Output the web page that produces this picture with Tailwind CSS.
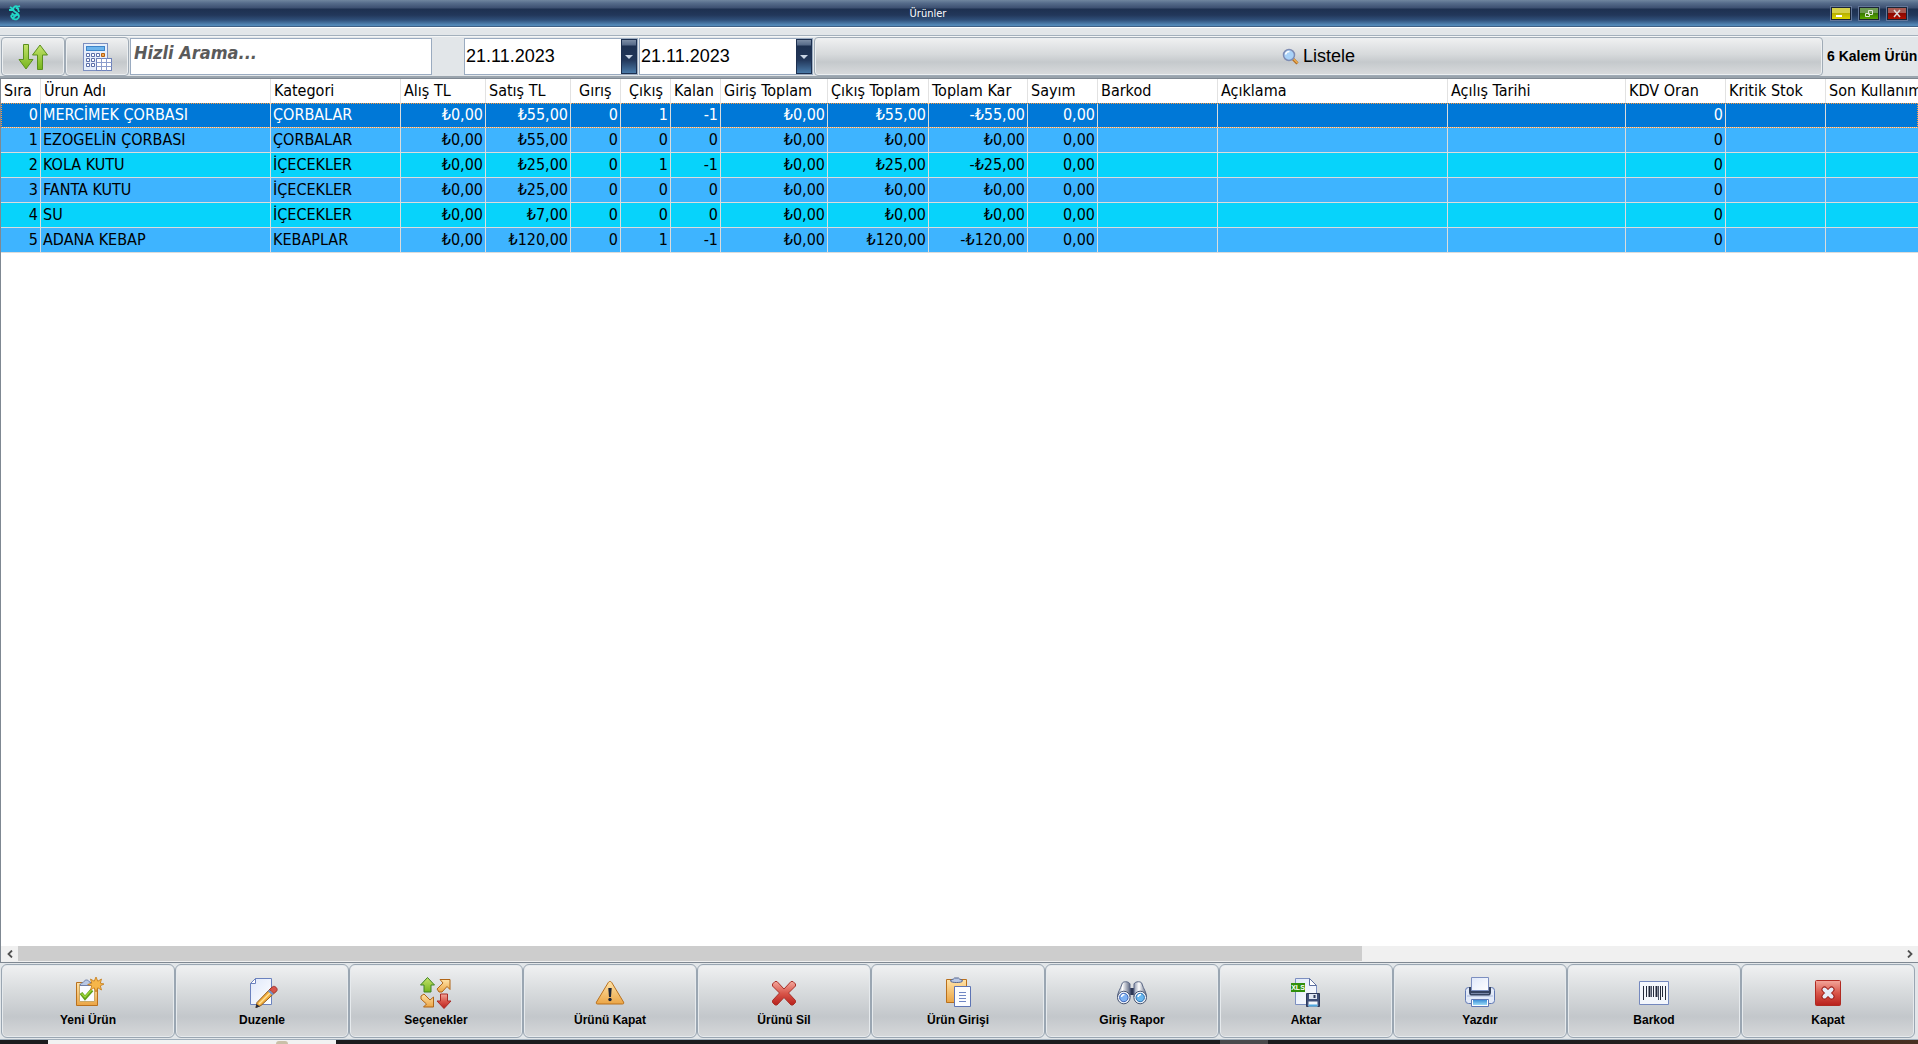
<!DOCTYPE html>
<html lang="tr">
<head>
<meta charset="utf-8">
<title>Ürünler</title>
<script src="https://cdn.jsdelivr.net/npm/@tailwindcss/browser@4"></script>
</head>
<body class="bg-[#e2e6e9] text-black font-['Liberation_Sans',sans-serif]">
<svg width="0" height="0" class="absolute" aria-hidden="true">
  <defs>
    <linearGradient id="gOrange" x1="0" y1="0" x2="0" y2="1"><stop offset="0" stop-color="#ffe3a8"/><stop offset="1" stop-color="#eba545"/></linearGradient>
    <linearGradient id="gGreen" x1="0" y1="0" x2="0" y2="1"><stop offset="0" stop-color="#c4e36c"/><stop offset="1" stop-color="#76b51c"/></linearGradient>
    <linearGradient id="gRed" x1="0" y1="0" x2="0" y2="1"><stop offset="0" stop-color="#f3a79c"/><stop offset=".5" stop-color="#d9564a"/><stop offset="1" stop-color="#b8201c"/></linearGradient>
    <linearGradient id="gPaper" x1="0" y1="0" x2="1" y2="1"><stop offset="0" stop-color="#dfe8fa"/><stop offset="1" stop-color="#ffffff"/></linearGradient>
    <linearGradient id="gSteel" x1="0" y1="0" x2="1" y2="0"><stop offset="0" stop-color="#8d97ad"/><stop offset=".4" stop-color="#ffffff"/><stop offset="1" stop-color="#5d6781"/></linearGradient>
    <linearGradient id="gBlue" x1="0" y1="0" x2="0" y2="1"><stop offset="0" stop-color="#3d8fd6"/><stop offset="1" stop-color="#9bdcf8"/></linearGradient>
  </defs>
</svg>
<div class="flex flex-col h-screen overflow-hidden">

  <header class="h-[27px] shrink-0 flex items-center border-b border-[#3f6187] bg-[linear-gradient(to_bottom,#70869f_0px,#566c8b_3px,#3c4f70_8px,#1d3050_9px,#22375a_15px,#30507a_20px,#5489b8_25px)]">
    <svg class="ml-[9px] w-3 h-4" viewBox="0 0 12 16" fill="none" stroke="#22d8c8" stroke-width="1.8"><path d="M1 2l3 2M0 5h4M9 2c-3-2-6 1-4 4 2 2 5 2 5 5s-3 4-5 3-4-3-2-4 5 2 6-1M8 2l3-1M9 4l1 3M3 8l3 4M7 3l3 1M3 14l6-6"/></svg>
    <h1 class="flex-1 text-center text-[11px] text-white pl-1 pt-0.5 font-['DejaVu_Sans_Condensed','DejaVu_Sans',sans-serif]">Ürünler</h1>
    <div class="flex gap-2 mr-[11px]">
      <button aria-label="Küçült" class="w-5 h-[13px] border border-[#1a2435] outline outline-[#64779a] bg-[linear-gradient(#d5d04a_45%,#b8b000_50%,#dcd600)] flex"><svg class="w-[18px] h-[11px]" viewBox="0 0 18 11"><path d="M4 8h6" stroke="#fff" stroke-width="2"/></svg></button>
      <button aria-label="Geri yükle" class="w-5 h-[13px] border border-[#1a2435] outline outline-[#64779a] bg-[linear-gradient(#6e9a52_45%,#387a00_50%,#5aa800)] flex"><svg class="w-[18px] h-[11px]" viewBox="0 0 18 11" fill="none" stroke="#e0e8d8"><path d="M8.500 2.500h4v4h-4zM5.500 5.500h4v3h-4z"/></svg></button>
      <button aria-label="Pencereyi kapat" class="w-5 h-[13px] border border-[#1a2435] outline outline-[#64779a] bg-[linear-gradient(#a85850_45%,#8c0800_50%,#b01000)] flex"><svg class="w-[18px] h-[11px]" viewBox="0 0 18 11"><path d="M6 2l6 7M12 2l-6 7" stroke="#ddd" stroke-width="1.500"/></svg></button>
    </div>
  </header>

  <div class="h-[9px] shrink-0 border-t border-b border-t-white border-b-[#a3b0bc]"></div>

  <div class="h-[42px] shrink-0 flex items-center pl-px border-t border-t-[#f4f6f7] border-b-2 border-b-[#9aa4ad] overflow-hidden">
    <button aria-label="Sırala" class="w-16 h-[39px] shrink-0 flex items-center justify-center rounded border border-[#a0abb6] shadow-[inset_0_0_0_1px_#eceff1] bg-[linear-gradient(#f0f1f2,#d6d9db_45%,#c5c9cc_65%,#d9dbdd)]">
      <svg class="w-8 h-8" viewBox="0 0 32 32" fill="url(#gGreen)" stroke="#5b8f1e" stroke-width="1"><path d="M6.500 3.500h5v15h4.500l-7 9.500-7-9.500h4.500z"/><path d="M20.500 28.500h5v-14.500h5l-7.500-10-7.500 10h5z"/></svg>
    </button>
    <button aria-label="Hesapla" class="w-16 h-[39px] shrink-0 flex items-center justify-center rounded border border-[#a0abb6] shadow-[inset_0_0_0_1px_#eceff1] bg-[linear-gradient(#f0f1f2,#d6d9db_45%,#c5c9cc_65%,#d9dbdd)]">
      <svg class="w-8 h-8" viewBox="0 0 32 32"><rect x="2.500" y="2.500" width="24" height="27" fill="#e6eefb" stroke="#7c8fc0"/><rect x="5.500" y="5.500" width="18" height="4" fill="#6db4ec" stroke="#3d84c8"/><g fill="#fff" stroke="#5c6fa8"><path d="M5.500 12.500h3v3h-3zM10.500 12.500h3v3h-3zM15.500 12.500h3v3h-3zM5.500 17.500h3v3h-3zM10.500 17.500h3v3h-3zM5.500 22.500h3v3h-3zM10.500 22.500h3v3h-3z"/></g><path d="M20.500 12.500h3v3h-3z" fill="#f0a850" stroke="#b86010"/><rect x="15.500" y="17.500" width="15" height="12" fill="#fff" stroke="#6e82ba"/><path d="M15.500 21.500h15M15.500 25.500h15M20.500 17.500v12M25.500 17.500v12" stroke="#8c9dcc"/></svg>
    </button>
    <input type="text" aria-label="Hızlı arama" placeholder="Hizli Arama..." class="ml-px w-[302px] h-[37px] shrink-0 border border-[#9aabc0] bg-white pl-[3px] pb-2 text-[18px] font-bold italic placeholder:text-[#5a5a5a] font-['DejaVu_Sans_Condensed','DejaVu_Sans',sans-serif]">
    <div class="ml-8 w-[174px] h-[37px] shrink-0 flex border border-[#9aabc0] bg-white">
      <input type="text" aria-label="Başlangıç tarihi" value="21.11.2023" class="min-w-0 flex-1 pl-px text-[18px]">
      <button aria-label="Başlangıç tarihini seç" class="w-4 flex items-center justify-center border border-[#1d3050] bg-[linear-gradient(#7d8ea6_0px,#566a88_5px,#1d3050_6px,#22375a_20px,#4a7aa8)]"><svg class="w-2 h-1" viewBox="0 0 8 4"><path d="M0 0h8L4 4z" fill="#c8d4e4"/></svg></button>
    </div>
    <div class="ml-px w-[174px] h-[37px] shrink-0 flex border border-[#9aabc0] bg-white">
      <input type="text" aria-label="Bitiş tarihi" value="21.11.2023" class="min-w-0 flex-1 pl-px text-[18px]">
      <button aria-label="Bitiş tarihini seç" class="w-4 flex items-center justify-center border border-[#1d3050] bg-[linear-gradient(#7d8ea6_0px,#566a88_5px,#1d3050_6px,#22375a_20px,#4a7aa8)]"><svg class="w-2 h-1" viewBox="0 0 8 4"><path d="M0 0h8L4 4z" fill="#c8d4e4"/></svg></button>
    </div>
    <button class="ml-px flex-1 h-[39px] flex items-center justify-center gap-1 text-[18px] rounded border border-[#a0abb6] shadow-[inset_0_0_0_1px_#eceff1] bg-[linear-gradient(#f0f1f2,#d6d9db_45%,#c5c9cc_65%,#d9dbdd)]">
      <svg class="w-[17px] h-[17px]" viewBox="0 0 17 17"><path d="M11 11l4.500 4.500" stroke="#b06a20" stroke-width="3"/><path d="M11.500 11l4 4" stroke="#f0b050" stroke-width="1.500"/><circle cx="7" cy="7" r="5.500" fill="#a9d2f8" stroke="#7d8cb4" stroke-width="1.500"/><path d="M3.500 6.500a4 4 0 0 1 4-3" stroke="#fff" stroke-width="1.500" fill="none"/></svg>
      Listele
    </button>
    <p class="w-[95px] shrink-0 pl-1 text-[14px] font-bold whitespace-nowrap">6 Kalem Ürün</p>
  </div>

  <main class="flex-1 min-h-0 flex flex-col bg-white border-l border-b border-t border-[#7f8892] font-['DejaVu_Sans_Condensed','DejaVu_Sans',sans-serif] text-base">
    <div class="flex-1 overflow-hidden">
      <table class="w-full table-fixed border-separate border-spacing-0 whitespace-nowrap leading-6">
        <colgroup>
          <col class="w-[40px]"><col class="w-[230px]"><col class="w-[130px]"><col class="w-[85px]"><col class="w-[85px]"><col class="w-[50px]"><col class="w-[50px]"><col class="w-[50px]"><col class="w-[107px]"><col class="w-[101px]"><col class="w-[99px]"><col class="w-[70px]"><col class="w-[120px]"><col class="w-[230px]"><col class="w-[178px]"><col class="w-[100px]"><col class="w-[100px]"><col>
        </colgroup>
        <thead><tr id="head"></tr></thead>
        <tbody id="rows"></tbody>
      </table>
    </div>
    <div class="h-4 shrink-0 flex items-center bg-[#f0f0f0]" role="scrollbar" aria-controls="rows" aria-orientation="horizontal" aria-valuenow="0">
      <button aria-label="Sola kaydır" class="w-[17px] h-4 flex items-center justify-center"><svg class="w-2 h-2" viewBox="0 0 8 8"><path d="M6 0.500L2.500 4L6 7.500" fill="none" stroke="#505050" stroke-width="1.800"/></svg></button>
      <div class="flex-1 h-[15px] self-start"><div class="h-full w-[71.4%] bg-[#cdcdcd]"></div></div>
      <button aria-label="Sağa kaydır" class="w-[17px] h-4 flex items-center justify-center"><svg class="w-2 h-2" viewBox="0 0 8 8"><path d="M2 0.500L5.500 4L2 7.500" fill="none" stroke="#505050" stroke-width="1.800"/></svg></button>
    </div>
  </main>

  <nav class="h-[77px] shrink-0 flex pt-px pb-px pl-px pr-[3px] border-b border-[#a0aebb]" id="actions"></nav>

  <div class="h-1 shrink-0 flex bg-[linear-gradient(to_right,#1c1c1e_80%,#2a211d_90%,#4a3022)]">
    <div class="ml-12 w-72 bg-[#f2f2f2] flex"><div class="ml-[228px] mt-px w-3 h-[3px] rounded-t-full bg-[#c9c0a8]"></div></div>
    <div class="ml-[884px] w-12 bg-[#4a4a4c]"></div>
  </div>
</div>

<script>
const heads = ['Sıra','Ürun Adı','Kategori','Alış TL','Satış TL','Gırış','Çıkış','Kalan','Giriş Toplam','Çıkış Toplam','Toplam Kar','Sayım','Barkod','Açıklama','Açılış Tarihi','KDV Oran','Kritik Stok','Son Kullanım'];
const pad = {5:'pl-2', 6:'pl-2'};
document.getElementById('head').innerHTML = heads.map((h,i) =>
  `<th scope="col" class="h-6 p-0 ${pad[i]||'pl-[3px]'} text-left font-normal border-r border-[#e2e2e2] last:border-r-0">${h}</th>`).join('');

const data = [
  ['0','MERCİMEK ÇORBASI','ÇORBALAR','₺0,00','₺55,00','0','1','-1','₺0,00','₺55,00','-₺55,00','0,00','','','','0','',''],
  ['1','EZOGELİN ÇORBASI','ÇORBALAR','₺0,00','₺55,00','0','0','0','₺0,00','₺0,00','₺0,00','0,00','','','','0','',''],
  ['2','KOLA KUTU','İÇECEKLER','₺0,00','₺25,00','0','1','-1','₺0,00','₺25,00','-₺25,00','0,00','','','','0','',''],
  ['3','FANTA KUTU','İÇECEKLER','₺0,00','₺25,00','0','0','0','₺0,00','₺0,00','₺0,00','0,00','','','','0','',''],
  ['4','SU','İÇECEKLER','₺0,00','₺7,00','0','0','0','₺0,00','₺0,00','₺0,00','0,00','','','','0','',''],
  ['5','ADANA KEBAP','KEBAPLAR','₺0,00','₺120,00','0','1','-1','₺0,00','₺120,00','-₺120,00','0,00','','','','0','',''],
];
document.getElementById('rows').innerHTML = data.map((r,n) => {
  const tone = n === 0 ? 'bg-[#0078d7] text-white outline-1 outline-dotted outline-[#ff9a3c] -outline-offset-1' : n % 2 ? 'bg-[#3eb4ff]' : 'bg-[#07d3fb]';
  return `<tr class="${tone}">` + r.map((c,i) =>
    `<td class="h-[25px] p-0 ${i === 1 || i === 2 ? 'pl-[2px]' : 'pr-[2px] text-right'} border-r border-b border-[#dcdcdc] last:border-r-0">${c}</td>`).join('') + '</tr>';
}).join('');

const actions = [
  ['Yeni Ürün', '<path d="M4.500 5.500h21v23h-21z" fill="url(#gOrange)" stroke="#b9701c"/><path d="M7.500 7.500h15v17h-15z" fill="#fbfcff" stroke="#c9a868"/><path d="M8 8.500c0-3 3-2 4-4 1-2 4-2 5 0 1 1 3 1 3 4z" fill="#b9c8e4" stroke="#6f7fa8"/><path d="M9 16l4 5 7-8" fill="none" stroke="#5f9f17" stroke-width="3.500"/><path d="M9.500 16.500l3.500 3.500 6.500-7" fill="none" stroke="#9cd63a" stroke-width="1.500"/><path d="M24 0l1.800 4.200 3.700-2.200-1.200 4.200 3.700.8-3.700 1.800 1.200 4.200-3.700-2.200-1.800 4.200-1.800-4.200-3.700 2.200 1.200-4.200-4-1.300 4-1.300-1.200-4.200 3.700 2.200z" fill="#f6b64a" stroke="#c47a16" stroke-width=".8"/>'],
  ['Duzenle', '<path d="M9.500 1.500h16v26h-21v-21z" fill="url(#gPaper)" stroke="#6b82be"/><path d="M9.500 1.500v5h-5z" fill="#fff" stroke="#6b82be"/><path d="M26 10l4.500 4L15 28.500l-5 2 1-5z" fill="#f3ae3e" stroke="#8f5a1c"/><path d="M27 13L13 27" stroke="#ffe39a" stroke-width="1.500"/><path d="M23.500 12.500l4.500 4 3-3c1-2-2-5-4-4z" fill="#d8544a" stroke="#93302c" stroke-width=".8"/><path d="M22.500 13.500l4.500 4" stroke="#6f8fd0" stroke-width="2"/><path d="M9.500 31l1-4 3.500 2.500z" fill="#252a3c"/>'],
  ['Seçenekler', '<path d="M7.500.500l7 7.500h-3.500v7h-7v-7h-3.500z" fill="url(#gGreen)" stroke="#3f8424"/><path d="M20 2.500h10v10l-3-3-5 5.500h-3l-2-3 6-6z" fill="url(#gOrange)" stroke="#b06516"/><path d="M13.500 30h-10l3-3-5.500-5v-3l3-2 6 6 3.500-3z" fill="url(#gOrange)" stroke="#b06516"/><path d="M24 31.500l7-7.500h-3.500v-7h-7v7h-3.500z" fill="url(#gRed)" stroke="#a92a24"/>'],
  ['Ürünü Kapat', '<path d="M16 4.500c1 0 1.500.500 2 1.500l11.500 19c.6 1.500 0 2-1 2h-25c-1 0-1.600-.5-1-2L14 6c.5-1 1-1.500 2-1.500z" fill="url(#gOrange)" stroke="#b9701c"/><path d="M14.300 11h3.400l-.7 9h-2z" fill="#1d2436"/><circle cx="16" cy="22.500" r="1.700" fill="#1d2436"/>'],
  ['Ürünü Sil', '<path d="M7 4.500h2L16 12l7-7.500h2l2.500 2.500v2L20.500 16l7 7.500v2L25 28h-2l-7-7.500L9 28H7l-2.500-2.500v-2l7-7.500-7-7V7z" fill="url(#gRed)" stroke="#a83028" stroke-linejoin="round"/>'],
  ['Ürün Girişi', '<path d="M4.500 2.500h20v23h-20z" fill="url(#gOrange)" stroke="#b9701c"/><path d="M8.500 4c0-2 3-1 4-3h4c1 2 4 1 4 3s-12 2-12 0z" fill="#b9c8e4" stroke="#55658f"/><path d="M12.500 9.500h16v20h-16z" fill="#fbfcff" stroke="#5d74b4"/><path d="M17 15.500h7M17 18.500h7M17 21.500h7M17 24.500h7" stroke="#6f86c4"/>'],
  ['Giriş Rapor', '<path d="M14 11h4v7h-4z" fill="#2d3856"/><path d="M6 7c0-3 7-3 8 0v13H1.500c0-5 3-8 4.500-13z" fill="url(#gSteel)" stroke="#5a6785"/><path d="M26 7c0-3-7-3-8 0v13h12.500c0-5-3-8-4.500-13z" fill="url(#gSteel)" stroke="#5a6785"/><circle cx="7.800" cy="20.500" r="6.300" fill="#f2f5fb" stroke="#46536f"/><circle cx="24.200" cy="20.500" r="6.300" fill="#f2f5fb" stroke="#46536f"/><circle cx="7.800" cy="20.500" r="4.200" fill="#7fb2f4" stroke="#3a62b8"/><circle cx="24.200" cy="20.500" r="4.200" fill="#69b8f0" stroke="#2a70b0"/><path d="M5.500 20a3 3 0 0 1 3-2.500M22 20a3 3 0 0 1 3-2.500" stroke="#fff" stroke-width="1.500" fill="none"/>'],
  ['Aktar', '<path d="M5.500 1.500h14l7 7v19h-21z" fill="url(#gPaper)" stroke="#7c8fc0"/><path d="M19.500 1.500l7 7h-7z" fill="#fff" stroke="#5d6fa0"/><path d="M1 6h14v9H1z" fill="#2f8f0c"/><text x="8" y="13" text-anchor="middle" font-size="7" font-weight="bold" font-family="Liberation Sans" fill="#fff">XLS</text><path d="M16.500 16.500h13v13h-13z" fill="#3f4f78" stroke="#2c3859"/><path d="M19 17h8v5h-8z" fill="#dfe6f2"/><path d="M23.500 18h2v3h-2z" fill="#2c3859"/><path d="M18.500 24.500h9v5h-9z" fill="#f4f8fd"/><path d="M18.500 27.500h9v2h-9z" fill="#4fa8e0"/>'],
  ['Yazdır', '<rect x="1.500" y="10.500" width="29" height="16" rx="3" fill="#e3eaf8" stroke="#5f78b4"/><path d="M3 19h26" stroke="#a9b8da"/><path d="M5 10v5c0 3 1.500 3.500 3 3.500h16c1.500 0 3-.5 3-3.500v-5z" fill="#35425f"/><path d="M7 16.500h18" stroke="#7a88a8"/><path d="M7.500.500h17v13h-17z" fill="url(#gPaper)" stroke="#7c8fc0"/><path d="M7.500 22.500h17v7h-17z" fill="#fff" stroke="#5f78b4"/><path d="M9 23h14v5H9z" fill="url(#gBlue)"/>'],
  ['Barkod', '<path d="M1.500 4.500h29v23h-29z" fill="#f4f7fd" stroke="#7488be"/><path d="M5.500 9v14M8.500 9v11M15.500 9v11M22.500 9v14M24.500 9v11M27.500 9v14" stroke="#23293a"/><path d="M11.500 9v11M18.500 9v11" stroke="#23293a" stroke-width="2"/><path d="M13.500 9v11M20.500 9v14" stroke="#4a5266"/>'],
  ['Kapat', '<rect x="3.500" y="3.500" width="25" height="25" rx="1" fill="url(#gRed)" stroke="#b02a22"/><path d="M12.500 12.500l7 7M19.500 12.500l-7 7" stroke="#9c1f1a" stroke-width="6" stroke-linecap="round"/><path d="M12.500 12.500l7 7M19.500 12.500l-7 7" stroke="#e6ecf8" stroke-width="4" stroke-linecap="round"/>'],
];
document.getElementById('actions').innerHTML = actions.map(([label, art]) =>
  `<button class="flex-1 flex flex-col items-center pt-3 text-[12px] leading-4 font-bold rounded-md border border-[#9aa6b2] shadow-[inset_0_0_0_1px_#e6eaed] bg-[linear-gradient(#f0f1f2,#d9dcde_35%,#c3c7cb_72%,#d6d8da)]"><svg class="w-8 h-8 mb-[3px]" viewBox="0 0 32 32" fill="none">${art}</svg>${label}</button>`).join('');
</script>
</body>
</html>
